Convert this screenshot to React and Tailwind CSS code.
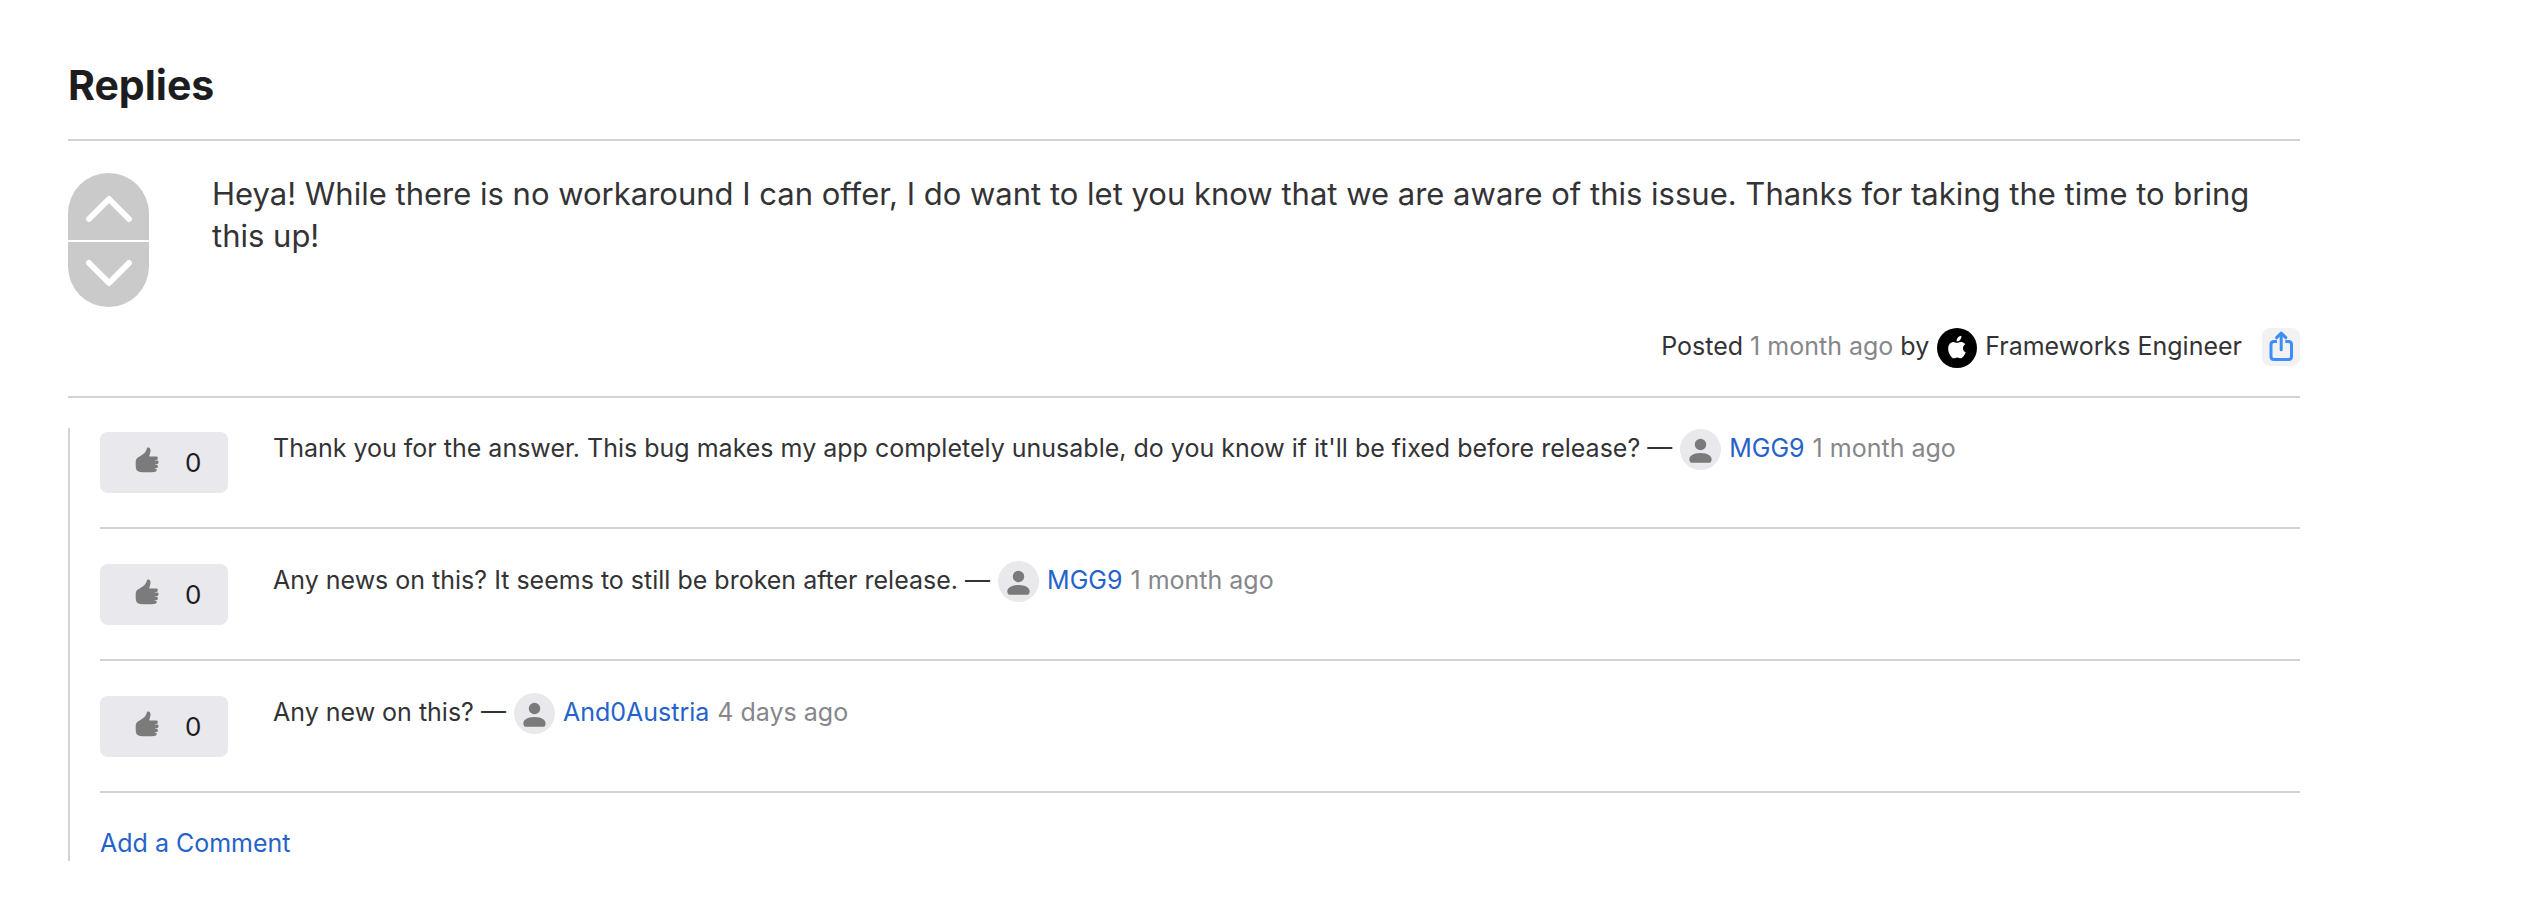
const comments = [
  {
    text: "Thank you for the answer. This bug makes my app completely unusable, do you know if it'll be fixed before release?",
    author: 'MGG9',
    when: '1 month ago',
  },
  { text: 'Any news on this? It seems to still be broken after release.', author: 'MGG9', when: '1 month ago' },
  { text: 'Any new on this?', author: 'And0Austria', when: '4 days ago' },
];

function Chevron({ down }) {
  return (
    <svg className="h-7 w-12" viewBox="0 0 48 28" fill="none" stroke="#fff" strokeWidth="6" strokeLinecap="round" strokeLinejoin="round" aria-hidden="true">
      <path d={down ? 'M4 4 L24 24 L44 4' : 'M4 24 L24 4 L44 24'} />
    </svg>
  );
}

function VoteControl() {
  return (
    <div className="flex w-[81px] shrink-0 flex-col gap-0.5">
      <button type="button" aria-label="Vote up" className="flex h-[67px] items-center justify-center rounded-t-full bg-[#cacaca] pt-1">
        <Chevron />
      </button>
      <button type="button" aria-label="Vote down" className="flex h-[65px] items-center justify-center rounded-b-full bg-[#cacaca] pb-1">
        <Chevron down />
      </button>
    </div>
  );
}

function AppleBadge() {
  return (
    <svg className="size-10 shrink-0" viewBox="0 0 40 40" aria-hidden="true">
      <circle cx="20" cy="20" r="20" fill="#000" />
      <path
        fill="#fff"
        d="M24.4 7.8c.2 1.5-.4 2.900-1.200 3.900-.9 1.100-2.100 1.800-3.500 1.700-.2-1.400.4-2.800 1.200-3.800.9-1 2.300-1.700 3.500-1.800zM28.300 16.300c-1.500.9-2.300 2.200-2.300 3.900 0 2 1.100 3.400 2.700 4.100-.4 1.200-1 2.300-1.700 3.300-.9 1.300-1.800 2.600-3.200 2.600s-1.800-.8-3.500-.8c-1.600 0-2.100.9-3.500.9-1.400 0-2.300-1.200-3.300-2.600-1.900-2.700-3.300-7.600-1.400-10.900.9-1.600 2.600-2.700 4.400-2.700 1.400 0 2.600.9 3.500.9.800 0 2.400-1.100 4.100-1 .7 0 2.700.3 4.200 2.300z"
      />
    </svg>
  );
}

function ShareIcon() {
  return (
    <svg className="size-[38px]" viewBox="0 0 38 38" fill="none" stroke="#3f8cfb" strokeWidth="3" strokeLinecap="round" strokeLinejoin="round" aria-hidden="true">
      <path strokeLinecap="butt" d="M15 13.500H12Q9 13.500 9 16.500V28.500Q9 31.500 12 31.500H26.500Q29.500 31.500 29.500 28.500V16.500Q29.500 13.500 26.500 13.500H23.300" />
      <path d="M19.200 21.800V5.600M14.600 9.600L19.200 5.200L23.800 9.600" />
    </svg>
  );
}

function ThumbIcon() {
  return (
    <svg className="h-[26px] w-6" viewBox="0 0 24 26" fill="#7b7b7b" aria-hidden="true">
      <path d="M12.900 .5C14.700 .2 15.700 1.800 15.500 4C15.300 6 14.400 7.800 14.300 9.600H21.800C23.200 9.700 23.200 12.600 21.700 12.900L19.800 13.100V13.600H22.500C23.900 13.800 23.900 16.800 22.500 17.100L20.200 17.200V17.700H22C23.300 18 23.100 20.900 21.800 21.100L19.600 21.300V21.700H21C22.200 22.100 21.800 24.500 20.300 24.700C16.700 25.400 9.700 25.400 4.900 24.900C2 24.600 .7 22.500 .7 19V14.500C.7 11.500 2.600 10.500 5 9.200C8.200 7.500 10.500 5.500 11.400 3C11.700 1.900 11.900 .8 12.900 .5Z" />
    </svg>
  );
}

function Avatar() {
  return (
    <svg className="size-[41px] shrink-0" viewBox="0 0 41 41" aria-hidden="true">
      <circle cx="20.500" cy="20.500" r="20.500" fill="#e8e8ed" />
      <circle cx="20.500" cy="15.500" r="5.700" fill="#7a7a7a" />
      <path fill="#7a7a7a" d="M9.500 31.500C8.400 27.500 13 24 20.500 24S32.600 27.500 31.500 31.500Q31.200 33.700 29.500 33.700H11.500Q9.800 33.700 9.500 31.500Z" />
    </svg>
  );
}

function Comment({ comment }) {
  return (
    <li className="flex h-[132px] items-start gap-[45px] border-b-2 border-[#d2d2d7] pt-8 first:h-[101px] first:pt-px">
      <button type="button" aria-label="Like" className="mt-[3px] flex h-[61px] w-32 shrink-0 items-center rounded-lg bg-[#e8e8ed] pl-[35px] text-[26px] text-[#1d1d1f]">
        <span className="mb-1.5">
          <ThumbIcon />
        </span>
        <span className="ml-[26px]">0</span>
      </button>
      <p className="flex flex-wrap items-center gap-x-2 text-[25px] leading-9">
        <span className="mb-1">{comment.text} —</span>
        <Avatar />
        <a href="#profile" className="mb-1 text-[#2563cb]">{comment.author}</a>
        <time className="mb-1 text-[#86868b]">{comment.when}</time>
      </p>
    </li>
  );
}

export default function App() {
  return (
    <main className="bg-white pt-[61px] pr-[242px] pb-14 pl-[68px] font-['Inter',sans-serif] text-[#333336]">
      <h2 className="border-b-2 border-[#d2d2d7] pb-[30px] text-[41px] leading-[48px] font-bold text-[#1d1d1f]">Replies</h2>
      <article className="border-b-2 border-[#d2d2d7] pt-8 pb-7">
        <div className="flex gap-[63px]">
          <VoteControl />
          <p className="text-[31px] leading-[42px]">
            Heya! While there is no workaround I can offer, I do want to let you know that we are aware of this issue. Thanks for taking the time to bring this up!
          </p>
        </div>
        <div className="mt-[21px] flex items-center justify-end gap-2 text-[25px] leading-9">
          <span className="mb-1">Posted <time className="text-[#86868b]">1 month ago</time> by</span>
          <AppleBadge />
          <span className="mb-1">Frameworks Engineer</span>
          <button type="button" aria-label="Share" className="mb-0.5 ml-3 rounded-lg bg-[#f2f2f2]">
            <ShareIcon />
          </button>
        </div>
      </article>
      <section aria-label="Comments" className="mt-[30px] border-l-2 border-[#d2d2d7] pl-[30px]">
        <ul>
          {comments.map((comment) => (
            <Comment key={comment.text} comment={comment} />
          ))}
        </ul>
        <a href="#comment" className="inline-block pt-8 text-[25px] leading-9 text-[#2563cb]">Add a Comment</a>
      </section>
    </main>
  );
}
